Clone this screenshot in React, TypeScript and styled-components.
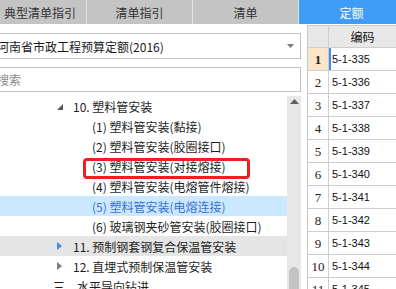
import React from "react";
import styled, { createGlobalStyle } from "styled-components";

const Global = createGlobalStyle`
  html, body { margin: 0; padding: 0; background: #fff; overflow: hidden; }
  body { font-family: "Noto Sans CJK SC", "Liberation Sans", sans-serif; }
`;

const Root = styled.div`
  width: 396px;
  height: 289px;
  overflow: hidden;
  background: #fff;
  display: flex;
  flex-direction: column;
`;

const TabBar = styled.div`
  display: flex;
  height: 24px;
  margin-left: -6px;
  background: #c4c4c4;
  flex: none;
`;

const Tab = styled.div<{ $w: number; $active?: boolean }>`
  width: ${(p) => p.$w}px;
  flex: none;
  display: flex;
  align-items: center;
  justify-content: center;
  font-size: 12px;
  color: ${(p) => (p.$active ? "#fff" : "#333")};
  background: ${(p) => (p.$active ? "#3f9cf8" : "transparent")};
  border-right: 1px solid #e4e4e4;
  box-sizing: border-box;
`;

const Body = styled.div`
  display: flex;
  flex: 1;
  min-height: 0;
  margin-top: 1px;
`;

const Left = styled.div`
  width: 301px;
  flex: none;
  display: flex;
  flex-direction: column;
  padding-top: 8px;
  gap: 8px;
`;

const Field = styled.div<{ $h: number }>`
  height: ${(p) => p.$h}px;
  margin-left: -2px;
  border: 1px solid #c3c3c3;
  box-sizing: border-box;
  display: flex;
  align-items: center;
  position: relative;
  font-size: 12px;
  color: #222;
  padding-left: 0;
  white-space: nowrap;
`;

const FieldText = styled.span<{ $muted?: boolean }>`
  margin-left: -2px;
  color: ${(p) => (p.$muted ? "#8a8a8a" : "#1a1a1a")};
  flex: 1;
`;

const Caret = styled.svg`
  width: 7px;
  height: 4px;
  margin-right: 6px;
`;

const TreeWrap = styled.div`
  flex: 1;
  display: flex;
  min-height: 0;
  margin-top: -4px;
`;

const Tree = styled.div`
  width: 287px;
  flex: none;
  display: flex;
  flex-direction: column;
`;

const Row = styled.div<{ $indent: number; $bg?: string; $color?: string }>`
  height: 20px;
  flex: none;
  display: flex;
  align-items: center;
  padding-left: ${(p) => p.$indent}px;
  background: ${(p) => p.$bg || "transparent"};
  color: ${(p) => p.$color || "#1e1e1e"};
  font-size: 12px;
  white-space: nowrap;
  position: relative;
`;

const Arrow = styled.span`
  width: 16px;
  flex: none;
  display: flex;
  align-items: center;
`;

const Mark = styled.div`
  position: absolute;
  left: 83px;
  top: 2px;
  width: 167px;
  height: 21px;
  border: 3px solid #e8231d;
  border-radius: 4px;
  box-sizing: border-box;
`;

const ScrollTrack = styled.div`
  width: 14px;
  flex: none;
  background: #e8e8e8;
  display: flex;
  flex-direction: column;
  align-items: center;
  padding-top: 3px;
  box-sizing: border-box;
`;

const ScrollUp = styled.svg`
  width: 9px;
  height: 5px;
`;

const Thumb = styled.div`
  margin-top: auto;
  width: 10px;
  height: 30px;
  margin-bottom: -8px;
  border-radius: 5px;
  background: #c2c2c2;
`;

const Right = styled.div`
  flex: 1;
  margin-left: 6px;
  border-left: 1px solid #c6c6c6;
  display: flex;
  flex-direction: column;
`;

const GridRow = styled.div`
  height: 23px;
  flex: none;
  display: flex;
  border-bottom: 1px solid #cfcfcf;
  box-sizing: border-box;
`;

const NumCell = styled.div<{ $sel?: boolean; $head?: boolean }>`
  width: 21px;
  flex: none;
  border-right: 1px solid #cfcfcf;
  background: ${(p) => (p.$head ? "#e8e8e8" : p.$sel ? "#fde5c9" : "#fff")};
  display: flex;
  align-items: center;
  justify-content: center;
  font-family: "Liberation Serif", serif;
  font-size: 13px;
  font-weight: ${(p) => (p.$sel ? 700 : 400)};
  color: #222;
  padding-top: 2px;
  box-sizing: border-box;
`;

const CodeCell = styled.div<{ $sel?: boolean; $head?: boolean }>`
  flex: 1;
  display: flex;
  align-items: center;
  justify-content: ${(p) => (p.$head ? "center" : "flex-start")};
  padding-left: ${(p) => (p.$head ? 0 : p.$sel ? 1 : 3)}px;
  border-left: ${(p) => (p.$sel ? "2px solid #3e8ee6" : "none")};
  background: ${(p) => (p.$head ? "#e8e8e8" : "#fff")};
  font-family: ${(p) =>
    p.$head ? '"Noto Sans CJK SC", sans-serif' : '"Liberation Sans", sans-serif'};
  font-size: ${(p) => (p.$head ? 12 : 11)}px;
  color: #111;
  white-space: nowrap;
`;

const ExpandedIcon = () => (
  <svg width="7" height="7" viewBox="0 0 7 7" style={{ marginTop: 2 }}>
    <polygon points="6,0 6,6 0,6" fill="#595959" />
  </svg>
);

const CollapsedIcon = ({ color }: { color: string }) => (
  <svg width="5" height="8" viewBox="0 0 5 8">
    <polygon points="0,0 5,4 0,8" fill={color} />
  </svg>
);

type Item = {
  text: string;
  indent: number;
  icon?: "exp" | "col" | "colHover";
  bg?: string;
  color?: string;
  mark?: boolean;
};

const items: Item[] = [
  { text: "10. 塑料管安装", indent: 57, icon: "exp" },
  { text: "(1) 塑料管安装(黏接)", indent: 92 },
  { text: "(2) 塑料管安装(胶圈接口)", indent: 92 },
  { text: "(3) 塑料管安装(对接熔接)", indent: 92, mark: true },
  { text: "(4) 塑料管安装(电熔管件熔接)", indent: 92 },
  { text: "(5) 塑料管安装(电熔连接)", indent: 92, bg: "#cce8ff", color: "#3b73d0" },
  { text: "(6) 玻璃钢夹砂管安装(胶圈接口)", indent: 92 },
  { text: "11. 预制钢套钢复合保温管安装", indent: 57, icon: "colHover", bg: "#e5e5e5" },
  { text: "12. 直埋式预制保温管安装", indent: 57, icon: "col" },
  { text: "三、水平导向钻进", indent: 53 },
];

const codes = Array.from({ length: 11 }, (_, i) => ({
  n: i + 1,
  code: `5-1-${335 + i}`,
}));

export default function App() {
  return (
    <Root>
      <Global />
      <TabBar>
        <Tab $w={93}>典型清单指引</Tab>
        <Tab $w={106}>清单指引</Tab>
        <Tab $w={106}>清单</Tab>
        <Tab $w={106} $active>
          定额
        </Tab>
      </TabBar>
      <Body>
        <Left>
          <Field $h={26}>
            <FieldText>河南省市政工程预算定额(2016)</FieldText>
            <Caret viewBox="0 0 7 4">
              <polygon points="0,0 7,0 3.5,4" fill="#7a7a7a" />
            </Caret>
          </Field>
          <Field $h={25}>
            <FieldText $muted>搜索</FieldText>
          </Field>
          <TreeWrap>
            <Tree>
              {items.map((it, i) => (
                <Row key={i} $indent={it.indent} $bg={it.bg} $color={it.color}>
                  {it.icon && (
                    <Arrow>
                      {it.icon === "exp" ? (
                        <ExpandedIcon />
                      ) : (
                        <CollapsedIcon color={it.icon === "colHover" ? "#3a8ee6" : "#7d7d7d"} />
                      )}
                    </Arrow>
                  )}
                  {it.text}
                  {it.mark && <Mark />}
                </Row>
              ))}
            </Tree>
            <ScrollTrack>
              <ScrollUp viewBox="0 0 9 5">
                <polygon points="0,5 9,5 4.5,0" fill="#606060" />
              </ScrollUp>
              <Thumb />
            </ScrollTrack>
          </TreeWrap>
        </Left>
        <Right>
          <GridRow style={{ borderTop: "1px solid #cfcfcf" }}>
            <NumCell $head />
            <CodeCell $head>编码</CodeCell>
          </GridRow>
          {codes.map((c) => (
            <GridRow key={c.n}>
              <NumCell $sel={c.n === 1}>{c.n}</NumCell>
              <CodeCell $sel={c.n === 1}>{c.code}</CodeCell>
            </GridRow>
          ))}
        </Right>
      </Body>
    </Root>
  );
}
